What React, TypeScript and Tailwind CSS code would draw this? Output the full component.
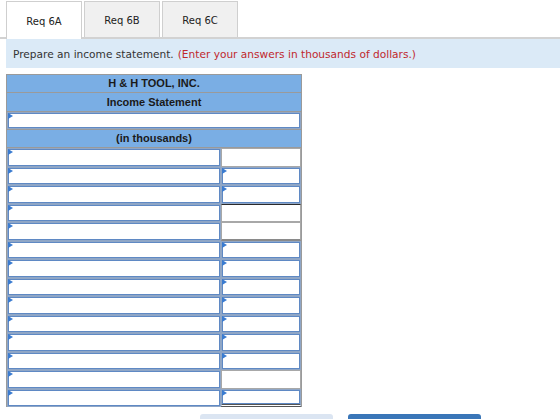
import React from "react";

const tabs = ["Req 6A", "Req 6B", "Req 6C"];

// which right-hand cells are inputs (true) or plain text cells
const rightInputs = [false, true, true, false, false, true, true, true, true, true, true, true, false, true];

const Marker = () => (
  <span className="absolute left-0 top-0 w-0 h-0 border-t-[3px] border-b-[3px] border-l-[5px] border-t-transparent border-b-transparent border-l-[#3a7bd0]" />
);

const InputCell = ({ className = "" }: { className?: string }) => (
  <div className={`relative h-full bg-white border border-[#8fa6c6] ${className}`}>
    <div className="absolute inset-0 border border-[#5f89c4]" />
    <Marker />
  </div>
);

const HeaderRow = ({ text, h }: { text: string; h: string }) => (
  <div
    className={`${h} flex items-center justify-center bg-[#7aaee4] border-x border-b border-[#9a9a9a] text-[11px] font-bold text-[#1a1a1a]`}
    style={{ fontFamily: '"Liberation Sans", Arial, sans-serif' }}
  >
    {text}
  </div>
);

const App: React.FC = () => {
  return (
    <div className="w-[560px] h-[419px] overflow-hidden bg-white relative" style={{ fontFamily: '"DejaVu Sans", Verdana, sans-serif' }}>
      {/* tabs */}
      <div className="flex items-end pt-[3px] pl-[6px] h-[39px] border-b-2 border-[#d2d2d2]">
        {tabs.map((t, i) => (
          <div
            key={t}
            className={`w-[76px] h-[36px] mr-[2px] flex items-center justify-center pt-[1px] text-[10px] text-[#222] border border-[#cfcfcf] ${
              i === 0 ? "bg-white border-b-0 h-[38px] -mb-[2px]" : "bg-[#f0f0f0] border-b-0"
            }`}
          >
            {t}
          </div>
        ))}
      </div>

      {/* instructions */}
      <div className="ml-[6px] h-[29px] bg-[#dbeaf7] flex items-center pl-[7px] pt-[2px] text-[10.6px] text-[#333]">
        <span>Prepare an income statement.</span>
        <span className="ml-[4px] text-[#c0282d]">(Enter your answers in thousands of dollars.)</span>
      </div>

      {/* statement table */}
      <div className="ml-[6px] mt-[6px] w-[296px]">
        <div className="border-t border-[#9a9a9a]">
          <HeaderRow text="H & H TOOL, INC." h="h-[18px]" />
          <HeaderRow text="Income Statement" h="h-[19px]" />
          <div className="h-[18px] border-x border-b border-[#9a9a9a] bg-white">
            <InputCell />
          </div>
          <HeaderRow text="(in thousands)" h="h-[18px]" />
        </div>
        <div className="border-x border-[#9a9a9a]">
          {rightInputs.map((isInput, i) => {
            let plain = "border border-[#a8a8a8]";
            if (i === 3) plain = "border border-[#a8a8a8] border-t-[#2a2a2a]";
            if (i === 4) plain = "border border-[#a8a8a8] border-b-2 border-b-[#8a8a8a]";
            return (
              <div key={i} className="h-[18.5px] flex">
                <div className="w-[214px] h-full">
                  <InputCell />
                </div>
                <div className="flex-1 h-full">
                  {isInput ? (
                    <InputCell className={i === 13 ? "border-b-[3px] border-b-[#555] border-double" : ""} />
                  ) : (
                    <div className={`h-full bg-white ${plain}`} />
                  )}
                </div>
              </div>
            );
          })}
        </div>
      </div>

      {/* bottom buttons */}
      <div className="absolute left-[200px] top-[414px] w-[133px] h-[20px] rounded-t-[3px] bg-[#dbe5f2]" />
      <div className="absolute left-[348px] top-[414px] w-[133px] h-[20px] rounded-t-[3px] bg-[#3a76b8]" />
    </div>
  );
};

export default App;
